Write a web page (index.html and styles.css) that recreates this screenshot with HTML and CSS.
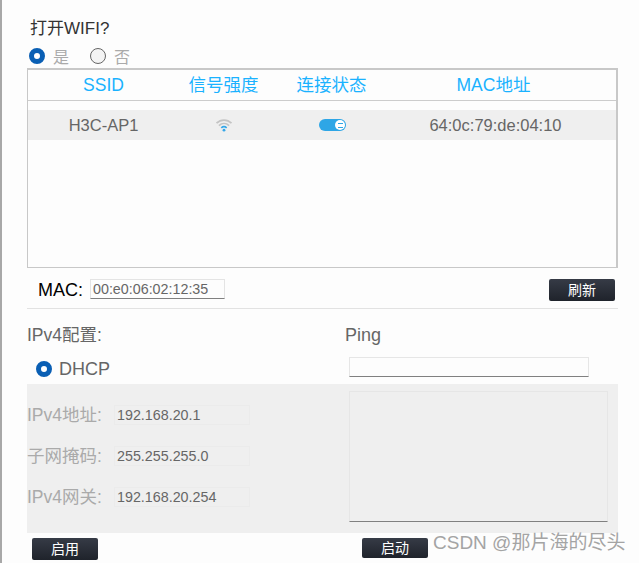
FILE: index.html
```html
<!DOCTYPE html>
<html lang="en">
<head>
    <meta charset="UTF-8">
    <meta name="viewport" content="width=device-width, initial-scale=1.0">
    <title>WIFI</title>
    <link rel="stylesheet" href="styles.css">
</head>
<body>
    <div class="dialog">
        <div class="title">打开WIFI?</div>
        <div class="radio-row">
            <span class="radio checked"></span><span class="radio-label">是</span>
            <span class="radio off"></span><span class="radio-label">否</span>
        </div>

        <div class="wifi-table">
            <div class="wifi-head">
                <div class="col-ssid">SSID</div>
                <div class="col-signal">信号强度</div>
                <div class="col-state">连接状态</div>
                <div class="col-mac">MAC地址</div>
            </div>
            <div class="wifi-row">
                <div class="col-ssid">H3C-AP1</div>
                <div class="col-signal">
                    <svg class="wifi-icon" width="18" height="14" viewBox="0 0 18 14">
                        <path d="M1.5 5.2C5.8 1 12.2 1 16.5 5.2" fill="none" stroke="#c4c4c4" stroke-width="1.7"/>
                        <path d="M3.9 7.6C6.9 4.8 11.1 4.8 14.1 7.6" fill="none" stroke="#c4c4c4" stroke-width="1.7"/>
                        <path d="M6.3 9.8C8 8.3 10 8.3 11.7 9.8" fill="none" stroke="#35a7e8" stroke-width="1.7"/>
                        <circle cx="9" cy="12.2" r="1.4" fill="#35a7e8"/>
                    </svg>
                </div>
                <div class="col-state">
                    <span class="toggle"><span class="knob"><span class="knob-mark"></span></span></span>
                </div>
                <div class="col-mac">64:0c:79:de:04:10</div>
            </div>
        </div>

        <div class="mac-row">
            <span class="mac-label">MAC:</span>
            <span class="mac-input">00:e0:06:02:12:35</span>
            <button class="btn btn-refresh">刷新</button>
        </div>

        <div class="config-head">
            <div class="config-left">
                <div class="config-title">IPv4配置:</div>
                <div class="dhcp-row"><span class="radio checked"></span><span>DHCP</span></div>
            </div>
            <div class="config-right">
                <div class="config-title ping-title">Ping</div>
                <div class="ping-input"></div>
            </div>
        </div>

        <div class="panel">
            <div class="fields">
                <div class="field"><span class="field-label">IPv4地址:</span><span class="field-value">192.168.20.1</span></div>
                <div class="field"><span class="field-label">子网掩码:</span><span class="field-value">255.255.255.0</span></div>
                <div class="field"><span class="field-label">IPv4网关:</span><span class="field-value">192.168.20.254</span></div>
            </div>
            <div class="ping-output"></div>
        </div>

        <div class="footer">
            <div class="footer-left"><button class="btn">启用</button></div>
            <div class="footer-right">
                <button class="btn">启动</button>
                <span class="watermark">CSDN @那片海的尽头</span>
            </div>
        </div>
    </div>
</body>
</html>
```

FILE: styles.css
```css
body {
    margin: 0;
    height: 563px;
    overflow: hidden;
    background-color: #fdfdfd;
    border-left: 2px solid #a8a8a8;
    box-sizing: border-box;
    color: #666666;
    font-family: "Liberation Sans", "Noto Sans CJK SC", sans-serif;
    font-size: 17.5px;
}
.dialog {
    width: 591px;
    padding-left: 25px;
}
.title {
    height: 46px;
    padding: 20px 0 0 3px;
    box-sizing: border-box;
    font-size: 17px;
    line-height: 18px;
    color: #333333;
}
.radio-row {
    display: flex;
    align-items: center;
    height: 22px;
    padding: 0 0 2px 2px;
    box-sizing: border-box;
    color: #aaaaaa;
    font-size: 16px;
}
.radio {
    width: 16px;
    height: 16px;
    border-radius: 50%;
    box-sizing: border-box;
    flex: none;
}
.radio.checked {
    border: 5px solid #0a5fb4;
    background: #ffffff;
}
.radio.off {
    border: 1px solid #666666;
    background: #f4f4f4;
    margin-left: 21px;
}
.radio-label {
    margin-left: 8px;
}
.wifi-table {
    height: 200px;
    box-sizing: border-box;
    border: 1px solid #c8c8c8;
    border-top-width: 2px;
    border-right-width: 2px;
}
.wifi-head {
    display: flex;
    align-items: center;
    height: 30px;
    border-bottom: 1px solid #cccccc;
    color: #1ab2ff;
    font-size: 17.5px;
    line-height: 30px;
    text-align: center;
}
.wifi-row {
    display: flex;
    align-items: center;
    height: 30px;
    margin-top: 9px;
    background: #efefef;
    font-size: 16.5px;
    text-align: center;
}
.col-ssid { width: 151px; }
.col-signal { width: 89px; }
.col-state { width: 127px; }
.col-mac { width: 201px; }
.wifi-head .col-mac { width: 197px; }
.wifi-row .col-signal,
.wifi-row .col-state {
    display: flex;
    justify-content: center;
}
.toggle {
    display: flex;
    justify-content: flex-end;
    align-items: center;
    width: 27px;
    height: 12px;
    margin-left: 2px;
    padding-right: 1px;
    box-sizing: border-box;
    border-radius: 6px;
    background: #2ea6e6;
}
.knob {
    display: flex;
    align-items: center;
    justify-content: center;
    width: 10px;
    height: 10px;
    border-radius: 50%;
    background: #ffffff;
}
.knob-mark {
    width: 5px;
    height: 3px;
    border-top: 1px solid #2ea6e6;
    border-bottom: 1px solid #2ea6e6;
}
.mac-row {
    display: flex;
    align-items: flex-start;
    height: 41px;
    padding: 11px 3px 0 11px;
    box-sizing: border-box;
    border-bottom: 1px solid #e2e2e2;
}
.mac-label {
    width: 52px;
    color: #000000;
    font-size: 18px;
    line-height: 22px;
}
.mac-input {
    width: 135px;
    height: 20px;
    box-sizing: border-box;
    border: 1px solid #e4e4e4;
    border-bottom-color: #808080;
    padding-left: 2px;
    font-size: 14.3px;
    line-height: 18px;
}
.btn {
    width: 66px;
    height: 22px;
    padding: 0;
    border: none;
    border-radius: 2px;
    background: linear-gradient(#363b46, #1f232b);
    color: #ffffff;
    font-family: inherit;
    font-size: 14px;
    line-height: 22px;
}
.btn-refresh {
    margin-left: auto;
}
.config-head {
    display: flex;
    height: 75px;
}
.config-left {
    width: 318px;
}
.config-title {
    padding-top: 17px;
    line-height: 18px;
}
.ping-title {
    font-size: 18px;
}
.dhcp-row {
    display: flex;
    align-items: center;
    gap: 7px;
    height: 20px;
    margin-top: 15px;
    padding-left: 9px;
    font-size: 18px;
    line-height: 21px;
}
.ping-input {
    width: 240px;
    height: 20px;
    margin: 13px 0 0 4px;
    box-sizing: border-box;
    border: 1px solid #e6e6e6;
    border-bottom-color: #808080;
}
.panel {
    display: flex;
    height: 149px;
    background: #efefef;
}
.fields {
    width: 318px;
    padding-top: 21px;
    box-sizing: border-box;
}
.field {
    display: flex;
    align-items: center;
    height: 20px;
    margin-bottom: 21px;
}
.field-label {
    width: 87px;
    padding-bottom: 4px;
    color: #aaaaaa;
}
.field-value {
    width: 136px;
    height: 20px;
    box-sizing: border-box;
    border: 1px solid #ebebeb;
    padding-left: 2px;
    font-size: 14.3px;
    line-height: 18px;
}
.ping-output {
    width: 259px;
    height: 131px;
    margin: 7px 0 0 4px;
    box-sizing: border-box;
    border: 1px solid #e6e6e6;
    border-bottom-color: #808080;
}
.footer {
    display: flex;
    padding-top: 5px;
}
.footer-left {
    flex: none;
    width: 318px;
    padding-left: 5px;
    box-sizing: border-box;
}
.footer-right {
    display: flex;
    flex: none;
    padding-left: 17px;
    white-space: nowrap;
}
.footer-right .btn {
    height: 20px;
    line-height: 20px;
}
.watermark {
    margin: -5px 0 0 5px;
    height: 20px;
    line-height: 20px;
    font-size: 19px;
    color: #a4a4a4;
}
```
